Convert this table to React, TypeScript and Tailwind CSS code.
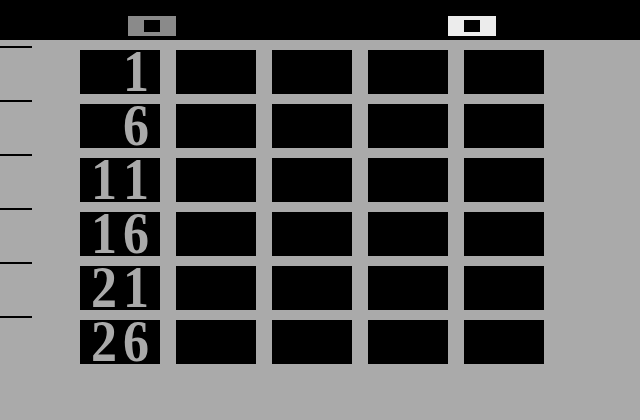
import React from 'react'

const rows = [1, 6, 11, 16, 21, 26]

const Indicator = ({ tone }: { tone: 'dim' | 'lit' }) => (
  <div
    className={
      'flex h-5 w-12 items-center justify-center ' +
      (tone === 'lit' ? 'bg-[#ececec]' : 'bg-[#8a8a8a]')
    }
  >
    <div className="h-3 w-4 bg-black" />
  </div>
)

function NumberCell({ value }: { value: number }) {
  const digits = String(value).split('')
  return (
    <div className="flex h-11 w-20 items-center justify-end bg-black pr-2">
      {digits.map((d, i) => (
        <span
          key={i}
          className="block h-9 w-8 scale-y-[1.13] text-center text-[52px] font-bold leading-[36px] text-[#aaaaaa]"
          style={{ fontFamily: '"Liberation Serif", serif' }}
        >
          {d}
        </span>
      ))}
    </div>
  )
}

export default function App() {
  return (
    <div className="h-[420px] w-[640px] overflow-hidden bg-[#aaaaaa]">
      {/* top status bar */}
      <div className="flex h-10 items-start bg-black pt-4">
        <div className="ml-[128px]">
          <Indicator tone="dim" />
        </div>
        <div className="ml-[272px]">
          <Indicator tone="lit" />
        </div>
      </div>

      <div className="pt-[6px]">
        {rows.map((n) => (
          <div key={n} className="h-[54px]">
            <div className="h-[2px] w-8 bg-black" />
            <div className="mt-[2px] flex gap-4 pl-20">
              <NumberCell value={n} />
              <div className="h-11 w-20 bg-black" />
              <div className="h-11 w-20 bg-black" />
              <div className="h-11 w-20 bg-black" />
              <div className="h-11 w-20 bg-black" />
            </div>
          </div>
        ))}
      </div>
    </div>
  )
}
